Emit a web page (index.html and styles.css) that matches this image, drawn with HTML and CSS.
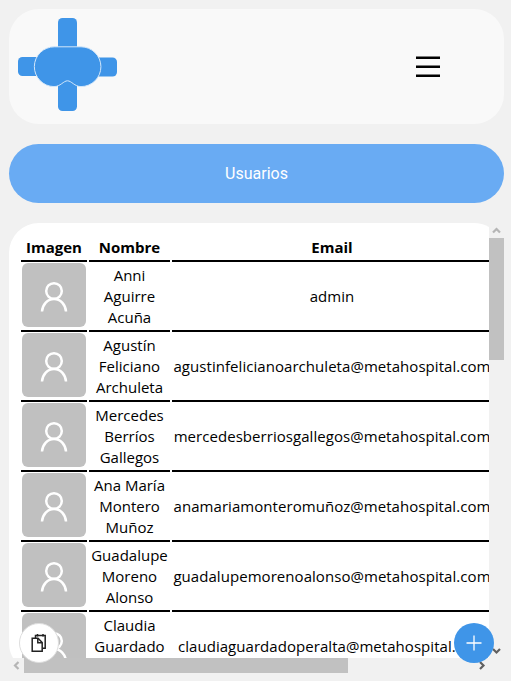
FILE: index.html
```html
<!DOCTYPE html>
<html lang="es">
<head>
<meta charset="utf-8">
<title>Usuarios</title>
<link rel="stylesheet" href="styles.css">
</head>
<body>
<svg width="0" height="0" class="defs">
  <symbol id="user" viewBox="0 0 64 64">
    <rect width="64" height="64" rx="6" fill="#c0c0c0"/>
    <g fill="none" stroke="#fff" stroke-width="2.5">
      <circle cx="32" cy="28" r="7.800"/>
      <path d="M20 48.500C20.500 41.500 25.500 36 32 36S43.500 41.500 44 48.500"/>
    </g>
  </symbol>
</svg>
<header class="header">
  <svg class="logo" width="100" height="94" viewBox="0 0 100 94">
    <g fill="#3f95e8">
      <rect x="40" y="0" width="19" height="40" rx="4.500"/>
      <rect x="40" y="55" width="19" height="38" rx="4.500"/>
      <rect x="0" y="39" width="40" height="19" rx="4.500"/>
      <rect x="59" y="39.500" width="40" height="19" rx="4.500"/>
      <path d="M36.500 28.800H63A19.900 19.900 0 1 1 63 68.600C56.500 68.600 53.500 62.800 49.500 62.800S42.500 68.600 36 68.600A19.900 19.900 0 1 1 36.500 28.800Z" stroke="#d3e7fa"/>
    </g>
  </svg>
  <svg class="menu" width="24" height="22" viewBox="0 0 24 22">
    <path d="M0 1.700H24M0 10.700H24M0 19.700H24" stroke="#000" stroke-width="2.400"/>
  </svg>
</header>
<h1 class="title">Usuarios</h1>
<main class="card">
  <div class="view">
    <div class="table">
      <div class="th">Imagen</div><div class="th">Nombre</div><div class="th">Email</div>
      <div class="td"><svg class="avatar"><use href="#user"/></svg></div><div class="td name">Anni<br>Aguirre<br>Acuña</div><div class="td mail">admin</div>
      <div class="td"><svg class="avatar"><use href="#user"/></svg></div><div class="td name">Agustín<br>Feliciano<br>Archuleta</div><div class="td mail">agustinfelicianoarchuleta@metahospital.com</div>
      <div class="td"><svg class="avatar"><use href="#user"/></svg></div><div class="td name">Mercedes<br>Berríos<br>Gallegos</div><div class="td mail">mercedesberriosgallegos@metahospital.com</div>
      <div class="td"><svg class="avatar"><use href="#user"/></svg></div><div class="td name">Ana María<br>Montero<br>Muñoz</div><div class="td mail">anamariamonteromuñoz@metahospital.com</div>
      <div class="td"><svg class="avatar"><use href="#user"/></svg></div><div class="td name">Guadalupe<br>Moreno<br>Alonso</div><div class="td mail">guadalupemorenoalonso@metahospital.com</div>
      <div class="td"><svg class="avatar"><use href="#user"/></svg></div><div class="td name">Claudia<br>Guardado<br>Peralta</div><div class="td mail">claudiaguardadoperalta@metahospital.com</div>
    </div>
  </div>
  <div class="vbar">
    <svg width="15" height="15"><path d="M4 9.500L7.500 6L11 9.500" stroke="#b5b5b5"/></svg>
    <div class="vthumb"></div>
    <svg class="end" width="15" height="15"><path d="M4 6L7.500 9.500L11 6" stroke="#606060"/></svg>
  </div>
  <div class="hbar">
    <svg width="15" height="15"><path d="M9.500 4L6 7.500L9.500 11" stroke="#b5b5b5"/></svg>
    <div class="hthumb"></div>
    <svg class="end" width="15" height="15"><path d="M6 4L9.500 7.500L6 11" stroke="#606060"/></svg>
  </div>
</main>
<button class="fab copy" aria-label="Copiar">
  <svg width="16" height="20" viewBox="0 0 16 20" fill="none" stroke="#222" stroke-width="1.500">
    <path d="M4.500 5V2.500H14.200V15.200H11.500"/><path d="M6.500 1V3.500M12 1V3.500"/>
    <path d="M1.200 5.200H7L11.200 9.500V18.200H1.200Z" fill="#fff"/><path d="M6.800 5.500V9.700H11"/>
  </svg>
</button>
<button class="fab add" aria-label="Añadir">
  <svg width="16" height="16"><path d="M8 .5V15.500M.5 8H15.500" stroke="#fff" stroke-width="1.300"/></svg>
</button>
</body>
</html>
```
FILE: styles.css
```css
* { box-sizing: border-box; }
html { overflow: hidden; }
body {
  margin: 0;
  padding: 9px 7px 8px 9px;
  height: 681px;
  background: #f1f1f1;
  font: 15px/21px "Open Sans", sans-serif;
  color: #000;
}
svg { display: block; flex: none; }
.defs { position: absolute; }
.header {
  display: flex;
  justify-content: space-between;
  align-items: flex-start;
  height: 115px;
  padding: 9px 64px 0 9px;
  border-radius: 30px;
  background: #f9f9f9;
}
.menu { margin-top: 38px; }
.title {
  display: flex;
  align-items: center;
  justify-content: center;
  height: 59px;
  margin: 20px 0;
  border-radius: 30px;
  background: #69abf3;
  color: #fff;
  font: 400 16px/20px Roboto, sans-serif;
}
.card {
  display: grid;
  grid-template: 435px 15px / 480px 15px;
  height: 450px;
}
.view {
  overflow: hidden;
  padding: 14px 0 0 12px;
  background: #fff;
  clip-path: path("M30 0H465Q473 0 480 4V435H4Q0 428 0 420V30A30 30 0 0 1 30 0Z");
}
.table {
  display: grid;
  width: 471px;
  grid-template-columns: 66px 81px 320px;
  column-gap: 2px;
  grid-template-rows: 25px;
  grid-auto-rows: 70px;
}
.th, .td {
  display: flex;
  justify-content: center;
  border-bottom: 2px solid #000;
  text-align: center;
  white-space: nowrap;
}
.th { font-weight: 700; }
.td { align-items: center; }
.mail { letter-spacing: .05px; }
.avatar { width: 64px; height: 64px; margin-bottom: 2px; }
.vbar, .hbar { display: flex; background: #f1f1f1; }
.vbar { flex-direction: column; }
.vbar svg, .hbar svg { fill: none; stroke-width: 2.2; }
.vthumb { height: 122px; background: #c1c1c1; }
.hthumb { width: 324px; background: #c1c1c1; }
.vbar .end { margin-top: auto; }
.hbar .end { margin-left: auto; }
.fab {
  position: fixed;
  display: flex;
  align-items: center;
  justify-content: center;
  width: 40px;
  height: 40px;
  padding: 0;
  border: 0;
  border-radius: 50%;
  top: 623px;
}
.copy { left: 19px; background: #fff; border: 1px solid #dedede; }
.add { left: 454px; background: #3f95e8; }
```
